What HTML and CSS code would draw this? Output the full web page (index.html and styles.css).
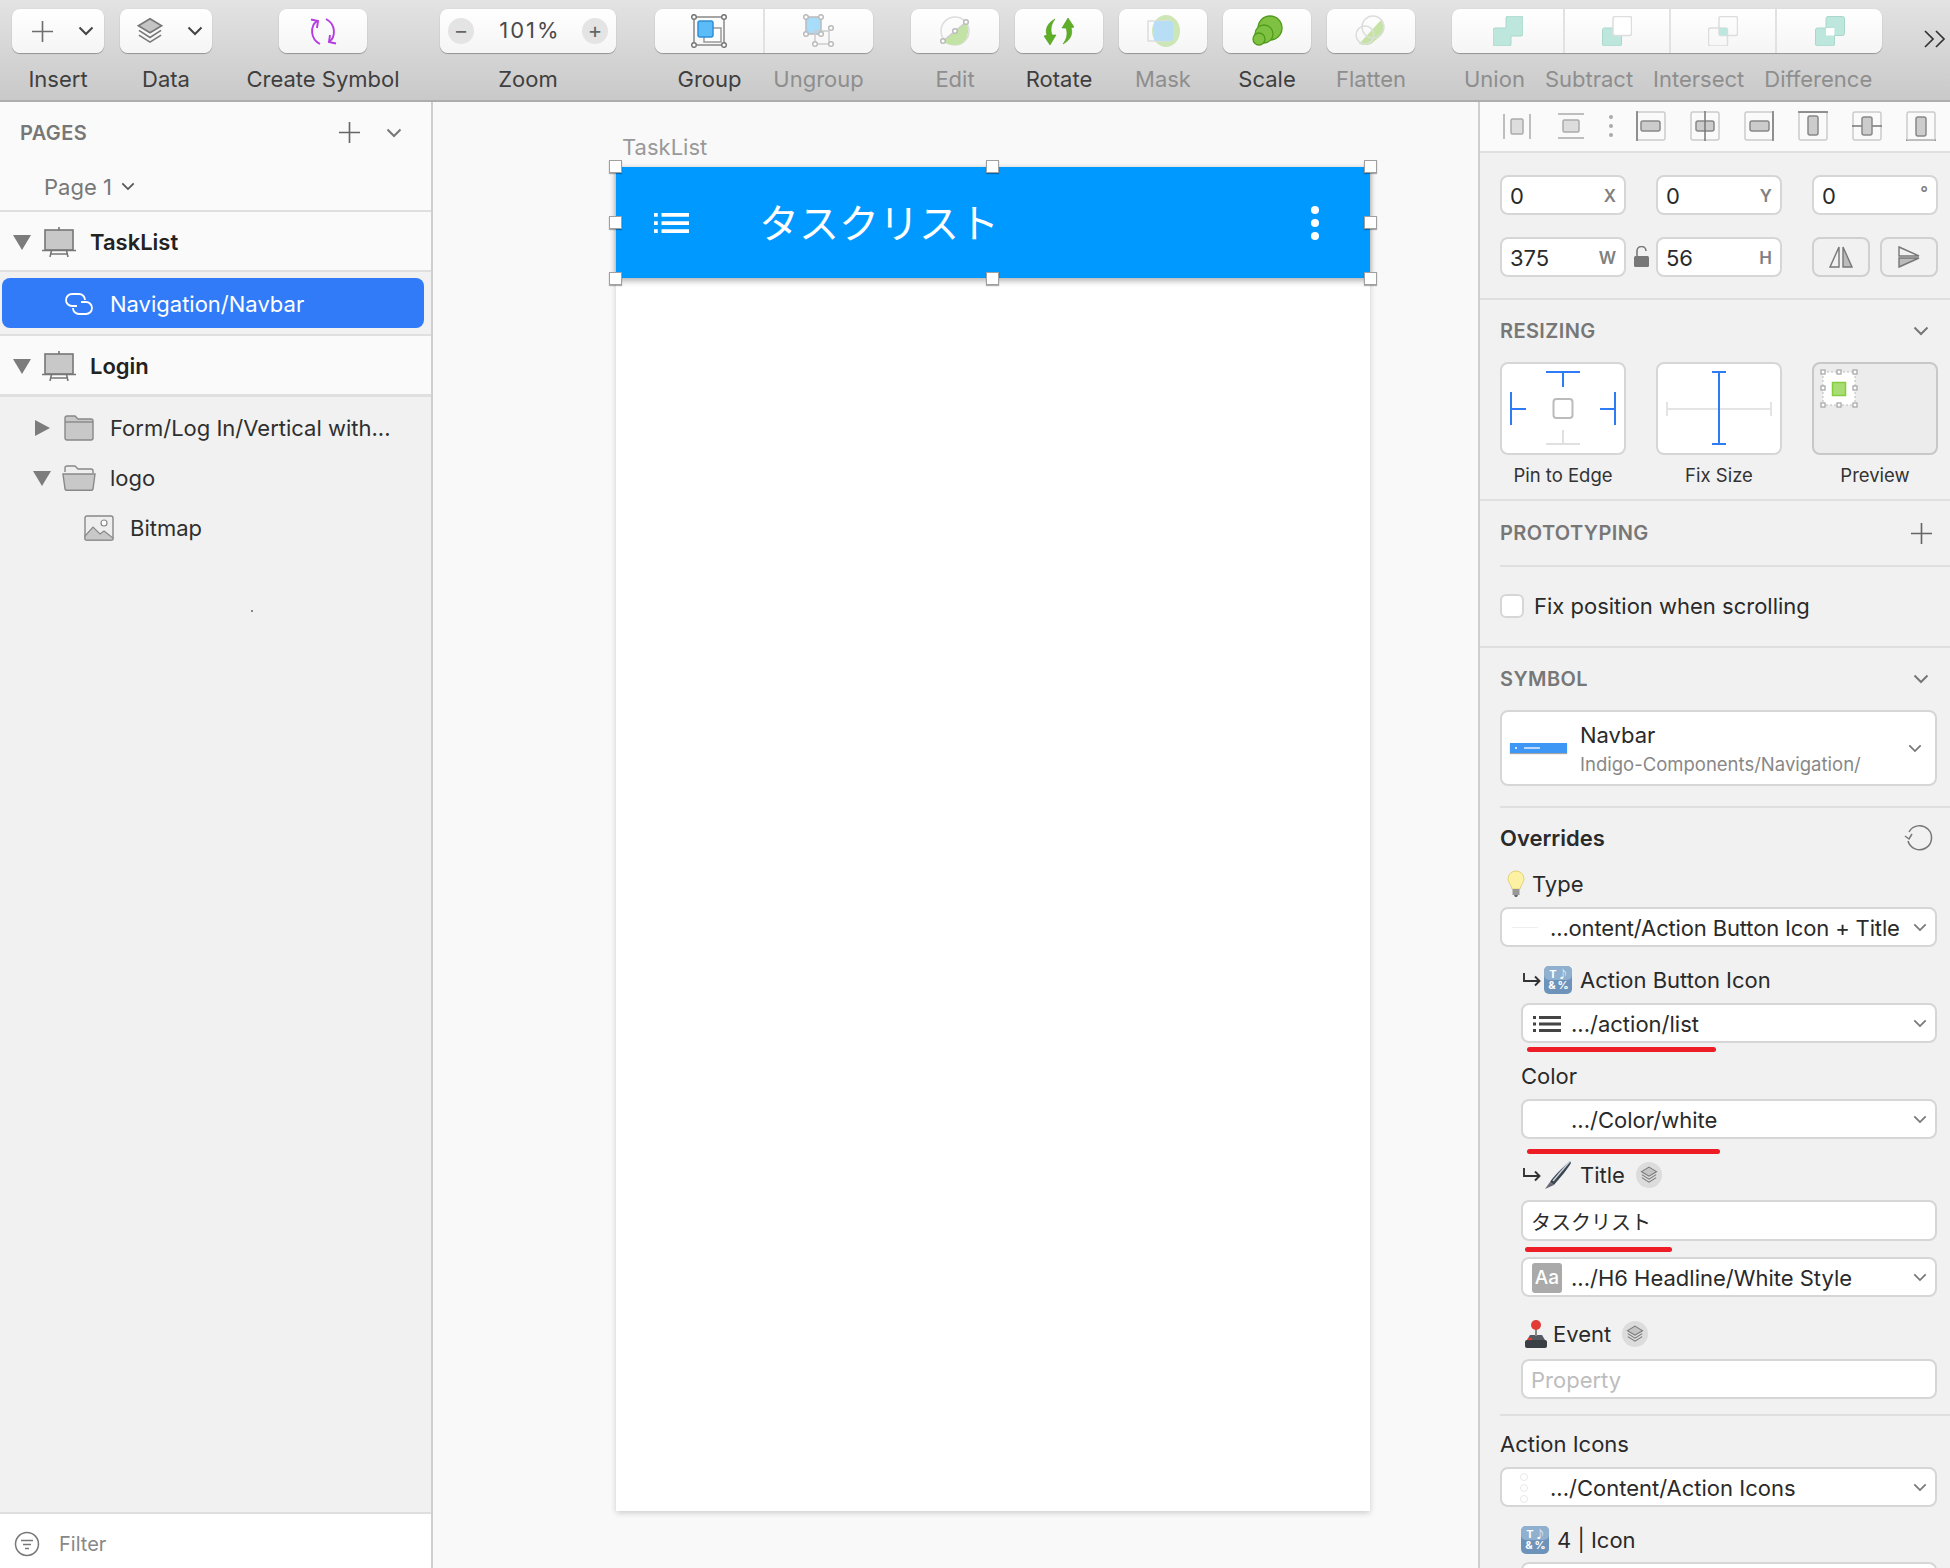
FILE: index.html
```html
<!DOCTYPE html>
<html lang="en">
<head>
  <meta charset="UTF-8">
  <title>Sketch - TaskList</title>
  <link rel="stylesheet" href="styles.css">
</head>
<body>
  <svg class="sprites" width="0" height="0">
    <symbol id="chev" viewBox="0 0 16 10"><path d="M1.5 1.5 8 8l6.5-6.5" fill="none" stroke="currentColor" stroke-width="2"/></symbol>
    <symbol id="plus" viewBox="0 0 24 24"><path d="M12 1v22M1 12h22" fill="none" stroke="currentColor" stroke-width="1.7"/></symbol>
    <symbol id="layers" viewBox="0 0 24 24">
      <path d="M12 1.5 22 7.5 12 13.5 2 7.5z" fill="#c4c4c4" stroke="#777" stroke-width="1.4"/>
      <path d="M2.5 11.5 12 17.5 21.5 11.5M2.5 15.5 12 21.5 21.5 15.5" fill="none" stroke="#777" stroke-width="1.4"/>
    </symbol>
    <symbol id="easel" viewBox="0 0 34 30">
      <rect x="3" y="3" width="28" height="20" fill="#c8c8c8" stroke="#777" stroke-width="1.6"/>
      <path d="M17 0v3M0 23.5h34M8 30l1.5-6.5M26 30l-1.5-6.5M8 27h18" fill="none" stroke="#777" stroke-width="1.6"/>
    </symbol>
    <symbol id="symbols" viewBox="0 0 28 28">
      <rect width="28" height="28" rx="5" fill="#6d93ba"/>
      <rect width="28" height="14" rx="5" fill="#8fb0cf"/>
      <text x="9" y="12" class="emoji-txt">T</text><text x="19" y="12" class="emoji-txt">♪</text>
      <text x="8" y="23" class="emoji-txt">&amp;</text><text x="19" y="23" class="emoji-txt">%</text>
    </symbol>
    <symbol id="hook" viewBox="0 0 18 14"><path d="M1 0v8h15M12 3.5 16.500 8 12 12.500" fill="none" stroke="#333" stroke-width="1.900"/></symbol>
    <symbol id="list" viewBox="0 0 28 16"><path d="M0 0h3v3H0zM6 0h22v3H6zM0 6.5h3v3H0zM6 6.5h22v3H6zM0 13h3v3H0zM6 13h22v3H6z" fill="currentColor"/></symbol>
  </svg>

  <header class="toolbar">
    <div class="tool tool-insert">
      <div class="btn">
        <svg class="ic-plus"><use href="#plus"/></svg>
        <svg class="ic-chev"><use href="#chev"/></svg>
      </div>
      <span class="label">Insert</span>
    </div>
    <div class="tool tool-data">
      <div class="btn">
        <svg class="ic-layers"><use href="#layers"/></svg>
        <svg class="ic-chev"><use href="#chev"/></svg>
      </div>
      <span class="label">Data</span>
    </div>
    <div class="tool tool-symbol">
      <div class="btn">
        <svg width="27" height="27" viewBox="0 0 27 27" fill="none" stroke="#b63ae2" stroke-width="1.900">
          <path d="M10 26C0 21 0 8 7 3"/><path d="M1 1.500 8 3l-1 7"/>
          <path d="M16 1c10 5 10 18 3 23"/><path d="M26 25.500 19 24l1-7"/>
        </svg>
      </div>
      <span class="label">Create Symbol</span>
    </div>
    <div class="tool tool-zoom">
      <div class="btn btn-zoom">
        <span class="zoom-round">−</span>
        <span class="zoom-val">101%</span>
        <span class="zoom-round">+</span>
      </div>
      <span class="label">Zoom</span>
    </div>
    <div class="tool tool-group">
      <div class="btn btn-seg">
        <div class="seg">
          <svg width="36" height="34" viewBox="0 0 36 34">
            <rect x="3" y="3" width="30" height="28" fill="none" stroke="#888" stroke-width="1.500"/>
            <rect x="13" y="14" width="17" height="14" fill="#fff" stroke="#999" stroke-width="1.500"/>
            <rect x="7" y="7" width="15" height="16" rx="2" fill="#5bbcf8" stroke="#2f8fd6" stroke-width="1.500"/>
            <g fill="#fff" stroke="#777" stroke-width="1.500"><circle cx="3" cy="3" r="2.300"/><circle cx="33" cy="3" r="2.300"/><circle cx="3" cy="31" r="2.300"/><circle cx="33" cy="31" r="2.300"/></g>
          </svg>
        </div>
        <div class="seg seg-off">
          <svg width="34" height="34" viewBox="0 0 34 34">
            <rect x="4" y="3" width="15" height="17" fill="#a8dcfb" stroke="#bbb" stroke-width="1.500"/>
            <rect x="13" y="17" width="14" height="13" fill="none" stroke="#ccc" stroke-width="1.500"/>
            <g fill="#fff" stroke="#bbb" stroke-width="1.500"><circle cx="4" cy="3" r="2.300"/><circle cx="19" cy="3" r="2.300"/><circle cx="4" cy="20" r="2.300"/><circle cx="19" cy="20" r="2.300"/><circle cx="29" cy="14" r="2.300"/><circle cx="13" cy="30" r="2.300"/><circle cx="29" cy="30" r="2.300"/></g>
          </svg>
        </div>
      </div>
      <div class="label-row">
        <span class="label">Group</span>
        <span class="label off">Ungroup</span>
      </div>
    </div>
    <div class="tool tool-edit">
      <div class="btn">
        <svg width="32" height="34" viewBox="0 0 32 34">
          <circle cx="16" cy="17" r="14" fill="none" stroke="#ddd" stroke-width="1.500"/>
          <path d="M4 27 27 8c5 9 1 23-11 23-5 0-9-1-12-4z" fill="#c3e2a6"/>
          <path d="M4 27 27 8" stroke="#ccc" stroke-width="1.200"/>
          <g fill="#fff" stroke="#bbb" stroke-width="1.500"><circle cx="4" cy="27" r="2.300"/><circle cx="16" cy="17" r="2.300"/><circle cx="27" cy="8" r="2.300"/></g>
        </svg>
      </div>
      <span class="label off">Edit</span>
    </div>
    <div class="tool tool-rotate">
      <div class="btn">
        <svg width="30" height="27" viewBox="0 0 30 27" fill="#5fae27" stroke="#4f9a1c" stroke-width=".6">
          <path d="M11 1C3 5 1 12 3 17l-3 1 6 9 6-10-4 0C6 12 7 6 11 1z"/>
          <path d="M19 26c8-4 10-11 8-16l3-1-6-9-6 10 4 0c2 5 1 11-3 16z"/>
        </svg>
      </div>
      <span class="label">Rotate</span>
    </div>
    <div class="tool tool-mask">
      <div class="btn">
        <svg width="36" height="34" viewBox="0 0 36 34">
          <ellipse cx="21" cy="17" rx="14" ry="16" fill="#cde6b6"/>
          <rect x="3" y="7" width="21" height="20" fill="none" stroke="#ddd" stroke-width="1.500"/>
          <rect x="9" y="7" width="19" height="20" rx="2" fill="#b7def5"/>
        </svg>
      </div>
      <span class="label off">Mask</span>
    </div>
    <div class="tool tool-scale">
      <div class="btn">
        <svg width="32" height="32" viewBox="0 0 32 32" fill="#7fc241" stroke="#4f9a1c" stroke-width="1.300">
          <ellipse cx="19" cy="13" rx="12" ry="12"/>
          <ellipse cx="13" cy="19" rx="9" ry="9"/>
          <ellipse cx="8" cy="24" rx="6" ry="6"/>
        </svg>
      </div>
      <span class="label">Scale</span>
    </div>
    <div class="tool tool-flatten">
      <div class="btn">
        <svg width="34" height="34" viewBox="0 0 34 34">
          <path d="M5 30 27 6c4 6 3 15-4 19-3 2-5 5-9 6-3 0-6 0-9-1z" fill="#c5e3a5"/>
          <g fill="none" stroke="#ddd" stroke-width="1.500"><circle cx="19" cy="13" r="11"/><circle cx="11" cy="21" r="9"/></g>
        </svg>
      </div>
      <span class="label off">Flatten</span>
    </div>
    <div class="tool tool-bool">
      <div class="btn btn-seg">
        <div class="seg seg-union">
          <svg width="30" height="30" viewBox="0 0 30 30"><path d="M13 2a2 2 0 0 1 2-2h13a2 2 0 0 1 2 2v16a2 2 0 0 1-2 2h-10v8a2 2 0 0 1-2 2H2a2 2 0 0 1-2-2V14a2 2 0 0 1 2-2h11z" fill="#bde7dc" stroke="#a9d8cb"/></svg>
        </div>
        <div class="seg seg-sub">
          <svg width="30" height="30" viewBox="0 0 30 30"><rect x=".5" y="12" width="19" height="18" rx="2" fill="#bde7dc" stroke="#a9d8cb"/><rect x="11" y=".5" width="18.500" height="19" rx="2" fill="#fff" stroke="#ddd" stroke-width="1.500"/></svg>
        </div>
        <div class="seg seg-int">
          <svg width="30" height="30" viewBox="0 0 30 30"><rect x="11" y=".5" width="18.500" height="19" rx="2" fill="none" stroke="#ddd" stroke-width="1.500"/><rect x=".5" y="12" width="19" height="18" rx="2" fill="none" stroke="#ddd" stroke-width="1.500"/><rect x="11" y="12" width="8.500" height="7.500" fill="#bde7dc"/></svg>
        </div>
        <div class="seg seg-diff">
          <svg width="30" height="30" viewBox="0 0 30 30"><rect x="11" y=".5" width="18.500" height="19" rx="2" fill="#bde7dc" stroke="#a9d8cb"/><rect x=".5" y="12" width="19" height="18" rx="2" fill="#bde7dc" stroke="#a9d8cb"/><rect x="11" y="12" width="8.500" height="7.500" fill="#fff"/></svg>
        </div>
      </div>
      <div class="label-row bool-labels">
        <span class="label off">Union</span>
        <span class="label off">Subtract</span>
        <span class="label off">Intersect</span>
        <span class="label off">Difference</span>
      </div>
    </div>
    <svg class="more" width="22" height="18" viewBox="0 0 22 18" fill="none" stroke="#333" stroke-width="1.700"><path d="M1 1l8 8-8 8M12 1l8 8-8 8"/></svg>
  </header>

  <div class="main">
    <aside class="layers">
      <div class="pages-head">
        <span class="caps">PAGES</span>
        <svg class="head-plus"><use href="#plus"/></svg>
        <svg class="head-chev"><use href="#chev"/></svg>
      </div>
      <div class="page-row">
        <span>Page 1</span>
        <svg class="page-chev"><use href="#chev"/></svg>
      </div>
      <div class="board-row">
        <i class="tri-down"></i>
        <svg class="easel"><use href="#easel"/></svg>
        <b>TaskList</b>
      </div>
      <div class="sel-wrap">
        <div class="sel-pill">
          <svg width="30" height="22" viewBox="0 0 30 22" fill="none" stroke="#fff" stroke-width="1.800">
            <path d="M13 13H8A6 6 0 0 1 8 1h7a6 6 0 0 1 6 6"/>
            <path d="M17 9h5a6 6 0 0 1 0 12h-7a6 6 0 0 1-6-6"/>
          </svg>
          <span>Navigation/Navbar</span>
        </div>
      </div>
      <div class="board-row">
        <i class="tri-down"></i>
        <svg class="easel"><use href="#easel"/></svg>
        <b>Login</b>
      </div>
      <div class="tree">
        <div class="tree-row">
          <i class="tri-right"></i>
          <svg width="30" height="26" viewBox="0 0 30 26"><path d="M1 3a2 2 0 0 1 2-2h8l3 3h13a2 2 0 0 1 2 2v17a2 2 0 0 1-2 2H3a2 2 0 0 1-2-2z" fill="#c8c8c8" stroke="#888" stroke-width="1.400"/><path d="M1 7h28" stroke="#888" stroke-width="1.400"/></svg>
          <span>Form/Log In/Vertical with...</span>
        </div>
        <div class="tree-row">
          <i class="tri-down small"></i>
          <svg class="folder-open" width="34" height="26" viewBox="0 0 34 26"><path d="M3 7V3a2 2 0 0 1 2-2h8l3 3h13a2 2 0 0 1 2 2v2" fill="#eee" stroke="#888" stroke-width="1.400"/><path d="M1 9h32l-2 15a1.500 1.500 0 0 1-1.500 1.200H4.500A1.500 1.500 0 0 1 3 24z" fill="#c8c8c8" stroke="#888" stroke-width="1.400"/></svg>
          <span>logo</span>
        </div>
        <div class="tree-row bitmap-row">
          <svg width="30" height="26" viewBox="0 0 30 26"><rect x="1" y="1" width="28" height="24" rx="2" fill="#eee" stroke="#888" stroke-width="1.400"/><circle cx="20" cy="8" r="3" fill="#fff" stroke="#888" stroke-width="1.200"/><path d="M1 21l8-9 7 7 4-3 9 7v1a1 1 0 0 1-1 1H2a1 1 0 0 1-1-1z" fill="#c8c8c8" stroke="#888" stroke-width="1.200"/></svg>
          <span>Bitmap</span>
        </div>
        <i class="speck"></i>
      </div>
      <div class="filter">
        <svg width="26" height="26" viewBox="0 0 26 26" fill="none" stroke="#777" stroke-width="1.500"><circle cx="13" cy="13" r="11.500"/><path d="M7 9.500h12M9 13.500h8M11 17.500h4"/></svg>
        <span>Filter</span>
      </div>
    </aside>

    <section class="canvas">
      <div class="board-name">TaskList</div>
      <div class="artboard">
        <div class="navbar">
          <svg class="nav-list"><use href="#list"/></svg>
          <span class="nav-title">タスクリスト</span>
          <span class="nav-dots"><i></i><i></i><i></i></span>
          <i class="handle h-tl"></i><i class="handle h-tc"></i><i class="handle h-tr"></i>
          <i class="handle h-ml"></i><i class="handle h-mr"></i>
          <i class="handle h-bl"></i><i class="handle h-bc"></i><i class="handle h-br"></i>
        </div>
      </div>
    </section>

    <aside class="inspector">
      <div class="align-row">
        <svg viewBox="0 0 30 30" class="al" fill="#ddd" stroke="#aaa" stroke-width="1.500"><path d="M2 3v25M28 3v25" fill="none"/><rect x="9" y="8" width="12" height="15" rx="1.500"/></svg>
        <svg viewBox="0 0 30 30" class="al" fill="#ddd" stroke="#aaa" stroke-width="1.500"><path d="M2 3h26M2 27h26" fill="none"/><rect x="7" y="9" width="16" height="12" rx="1.500"/></svg>
        <span class="al-dots"><i></i><i></i><i></i></span>
        <svg viewBox="0 0 30 30" class="al" fill="#ccc" stroke="#888" stroke-width="1.500"><rect x="1" y="1" width="28" height="28" rx="2" fill="none" stroke="#ccc"/><path d="M1 0v30" fill="none" stroke="#777"/><rect x="5" y="10" width="19" height="10" rx="2"/></svg>
        <svg viewBox="0 0 30 30" class="al" fill="#ccc" stroke="#888" stroke-width="1.500"><rect x="1" y="1" width="28" height="28" rx="2" fill="none" stroke="#ccc"/><rect x="6" y="10" width="18" height="10" rx="2"/><path d="M15 0v30" fill="none" stroke="#777"/></svg>
        <svg viewBox="0 0 30 30" class="al" fill="#ccc" stroke="#888" stroke-width="1.500"><rect x="1" y="1" width="28" height="28" rx="2" fill="none" stroke="#ccc"/><path d="M29 0v30" fill="none" stroke="#777"/><rect x="6" y="10" width="19" height="10" rx="2"/></svg>
        <svg viewBox="0 0 30 30" class="al" fill="#ccc" stroke="#888" stroke-width="1.500"><rect x="1" y="1" width="28" height="28" rx="2" fill="none" stroke="#ccc"/><path d="M0 1h30" fill="none" stroke="#777"/><rect x="10" y="5" width="10" height="19" rx="2"/></svg>
        <svg viewBox="0 0 30 30" class="al" fill="#ccc" stroke="#888" stroke-width="1.500"><rect x="1" y="1" width="28" height="28" rx="2" fill="none" stroke="#ccc"/><path d="M0 15h30" fill="none" stroke="#777"/><rect x="10" y="6" width="10" height="18" rx="2"/></svg>
        <svg viewBox="0 0 30 30" class="al" fill="#ccc" stroke="#888" stroke-width="1.500"><path d="M0 29h30" fill="none" stroke="#777"/><rect x="1" y="1" width="28" height="28" rx="2" fill="none" stroke="#ccc"/><rect x="10" y="6" width="10" height="19" rx="2"/></svg>
      </div>

      <div class="geom">
        <div class="geom-row">
          <div class="field num"><span>0</span><em>X</em></div>
          <div class="lock-slot"></div>
          <div class="field num"><span>0</span><em>Y</em></div>
          <div class="lock-slot"></div>
          <div class="field num"><span>0</span><em class="deg">°</em></div>
        </div>
        <div class="geom-row">
          <div class="field num"><span>375</span><em>W</em></div>
          <div class="lock-slot">
            <svg width="15" height="22" viewBox="0 0 15 22" fill="none"><path d="M3 10V5a4.500 4.500 0 0 1 9 0" stroke="#777" stroke-width="1.600"/><rect y="10" width="15" height="11" rx="1.500" fill="#777"/></svg>
          </div>
          <div class="field num"><span>56</span><em>H</em></div>
          <div class="lock-slot"></div>
          <div class="flips">
            <div class="flip"><svg width="24" height="24" viewBox="0 0 24 24" stroke="#777" stroke-width="1.400"><path d="M10 2 1 22h9z" fill="none"/><path d="M14 2l9 20h-9z" fill="#bbb"/></svg></div>
            <div class="flip"><svg width="24" height="24" viewBox="0 0 24 24" stroke="#777" stroke-width="1.400"><path d="M2 2l20 9H2z" fill="none"/><path d="M2 22l20-9H2z" fill="#bbb"/></svg></div>
          </div>
        </div>
      </div>

      <div class="resizing">
        <div class="sec-head"><span class="caps">RESIZING</span><svg class="sec-chev"><use href="#chev"/></svg></div>
        <div class="pin-row">
          <div class="pin-col">
            <svg class="pin-box" viewBox="2 2 122 89" fill="none" stroke-width="2">
              <g stroke="#2f7bf6"><path d="M46 10h34M63 10v15M11 30v33M11 47h15M115 30v33M100 47h15"/></g>
              <path d="M63 68v14M46 82h34" stroke="#e0e0e0"/>
              <rect x="53.500" y="37" width="19" height="19" rx="3" fill="#fff" stroke="#bbb"/>
            </svg>
            <span>Pin to Edge</span>
          </div>
          <div class="pin-col">
            <svg class="pin-box" viewBox="2 2 122 89" fill="none" stroke-width="2">
              <path d="M11 47h104M11 40v14M115 40v14" stroke="#e4e4e4"/>
              <path d="M63 10v72M56 10h14M56 82h14" stroke="#2f7bf6"/>
            </svg>
            <span>Fix Size</span>
          </div>
          <div class="pin-col">
            <svg class="pin-box preview" viewBox="2 2 122 89">
              <rect x="11" y="10" width="32" height="33" fill="#fff" stroke="#bbb" stroke-dasharray="2 2"/>
              <rect x="20.500" y="20.500" width="13" height="13" fill="#a8dd74" stroke="#85cc3e" stroke-width="1.500"/>
              <g fill="#fff" stroke="#aaa" stroke-width="1.300">
                <rect x="9" y="8" width="4" height="4"/><rect x="25" y="8" width="4" height="4"/><rect x="41" y="8" width="4" height="4"/>
                <rect x="9" y="24" width="4" height="4"/><rect x="41" y="24" width="4" height="4"/>
                <rect x="9" y="41" width="4" height="4"/><rect x="25" y="41" width="4" height="4"/><rect x="41" y="41" width="4" height="4"/>
              </g>
            </svg>
            <span>Preview</span>
          </div>
        </div>
      </div>

      <div class="proto">
        <div class="sec-head lined"><span class="caps">PROTOTYPING</span><svg class="sec-plus"><use href="#plus"/></svg></div>
        <div class="check-row"><i class="check"></i><span>Fix position when scrolling</span></div>
      </div>

      <div class="symbol">
        <div class="sec-head"><span class="caps">SYMBOL</span><svg class="sec-chev"><use href="#chev"/></svg></div>
        <div class="symbol-box">
          <span class="thumb"></span>
          <div class="symbol-name">
            <span>Navbar</span>
            <small>Indigo-Components/Navigation/</small>
          </div>
          <svg class="sel-chev"><use href="#chev"/></svg>
        </div>
      </div>

      <div class="overrides">
        <div class="ov-head">
          <b>Overrides</b>
          <svg width="30" height="30" viewBox="0 0 30 30" fill="none" stroke="#777" stroke-width="1.500"><path d="M5 9a12 12 0 1 1-1 9"/><path d="M1 13l4 3 3-5" /></svg>
        </div>

        <div class="ov-row ov-type">
          <svg width="18" height="28" viewBox="0 0 18 28"><path d="M9 1a8 8 0 0 1 8 8c0 4-3 5-4 10H5C4 14 1 13 1 9a8 8 0 0 1 8-8z" fill="#fdf1a4" stroke="#e3d27a"/><rect x="5.500" y="19" width="7" height="6" fill="#999"/><path d="M7 25h4l-1 2H8z" fill="#666"/></svg>
          <span>Type</span>
        </div>
        <div class="field sel mt7">
          <span class="slot"><i class="ghost-bar"></i></span>
          <span class="val val-tight">...ontent/Action Button Icon + Title</span>
          <svg class="sel-chev"><use href="#chev"/></svg>
        </div>

        <div class="indent">
          <div class="ov-row mt17">
            <svg class="hook"><use href="#hook"/></svg>
            <svg class="sym"><use href="#symbols"/></svg>
            <span>Action Button Icon</span>
          </div>
          <div class="field sel mt7">
            <span class="slot"><svg class="slot-list"><use href="#list"/></svg></span>
            <span class="val">.../action/list</span>
            <svg class="sel-chev"><use href="#chev"/></svg>
          </div>
          <i class="red red1"></i>

          <div class="ov-row mt8"><span>Color</span></div>
          <div class="field sel mt7">
            <span class="slot"></span>
            <span class="val">.../Color/white</span>
            <svg class="sel-chev"><use href="#chev"/></svg>
          </div>
          <i class="red red2"></i>

          <div class="ov-row mt5">
            <svg class="hook"><use href="#hook"/></svg>
            <svg width="28" height="28" viewBox="0 0 28 28"><path d="M26 0C19 6 10 15 6 21l4 3C15 18 23 9 27 2z" fill="#3b4550"/><path d="M26 0 9 20" stroke="#c8d2dc" stroke-width="1.500"/><path d="M6 21l4 3-9 4z" fill="#667"/></svg>
            <span>Title</span>
            <span class="layer-chip"><svg width="18" height="18"><use href="#layers"/></svg></span>
          </div>
          <div class="field text-field"><span>タスクリスト</span></div>
          <i class="red red3"></i>

          <div class="field sel style-field">
            <span class="slot"><span class="aa">Aa</span></span>
            <span class="val">.../H6 Headline/White Style</span>
            <svg class="sel-chev"><use href="#chev"/></svg>
          </div>

          <div class="ov-row event-row">
            <svg width="22" height="28" viewBox="0 0 22 28"><rect y="20" width="22" height="8" rx="2" fill="#3a3f46"/><path d="M2 20l3-5h12l3 5z" fill="#555b63"/><path d="M10 8h2v8h-2z" fill="#888"/><circle cx="11" cy="5" r="5" fill="#e23b35"/><ellipse cx="5" cy="19" rx="2.500" ry="1.300" fill="#e23b35"/></svg>
            <span>Event</span>
            <span class="layer-chip"><svg width="18" height="18"><use href="#layers"/></svg></span>
          </div>
          <div class="field placeholder-field"><span>Property</span></div>
        </div>
      </div>

      <div class="action-icons">
        <div class="ov-row"><span>Action Icons</span></div>
        <div class="field sel mt7">
          <span class="slot"><svg width="8" height="30" viewBox="0 0 8 30" fill="none" stroke="#e8e8e8" transform="translate(8 0)"><circle cx="4" cy="4" r="3.500"/><circle cx="4" cy="15" r="3.500"/><circle cx="4" cy="26" r="3.500"/></svg></span>
          <span class="val">.../Content/Action Icons</span>
          <svg class="sel-chev"><use href="#chev"/></svg>
        </div>
        <div class="indent">
          <div class="ov-row mt17">
            <svg class="sym"><use href="#symbols"/></svg>
            <span>4 | Icon</span>
          </div>
          <div class="field sel last-field"></div>
        </div>
      </div>
    </aside>
  </div>
</body>
</html>
```

FILE: styles.css
```css
* {
  box-sizing: border-box;
}

html, body {
  margin: 0;
  height: 100%;
  overflow: hidden;
}

body {
  font-family: Inter, "Noto Sans CJK JP", sans-serif;
  font-size: 22px;
  color: #2a2a2a;
  background-color: #f9f9f9;
}

i, em {
  font-style: normal;
}

.sprites {
  display: none;
}

.emoji-txt {
  font-size: 11px;
  font-weight: 700;
  fill: #fff;
  text-anchor: middle;
}

/* toolbar */
.toolbar {
  display: flex;
  height: 102px;
  padding: 9px 0 0 12px;
  background: linear-gradient(#e3e3e3, #c9c9c9);
  border-bottom: 2px solid #adadad;
}

.tool {
  display: flex;
  flex-direction: column;
  align-items: center;
  width: 88px;
  flex: none;
}

.btn {
  display: flex;
  align-items: center;
  justify-content: center;
  width: 100%;
  height: 44px;
  background: linear-gradient(#ffffff, #f5f5f5);
  border-radius: 8px;
  box-shadow: 0 1px 1px rgba(0, 0, 0, 0.3), 0 0 1px rgba(0, 0, 0, 0.12);
}

.label {
  margin-top: 13px;
  line-height: 26px;
  font-size: 22px;
  color: #3f3f3f;
  white-space: nowrap;
}

.label.off {
  color: #8e8e8e;
}

.tool-insert, .tool-data {
  width: 92px;
}

.tool-data {
  margin-left: 16px;
}

.tool-insert .btn, .tool-data .btn {
  justify-content: flex-start;
}

.tool-symbol {
  margin-left: 67px;
}

.tool-zoom {
  width: 176px;
  margin-left: 73px;
}

.tool-group {
  width: 218px;
  margin-left: 39px;
}

.tool-edit {
  margin-left: 38px;
}

.tool-rotate, .tool-mask, .tool-scale, .tool-flatten {
  margin-left: 16px;
}

.tool-bool {
  width: 430px;
  margin-left: 37px;
}

.ic-plus {
  width: 23px;
  height: 23px;
  margin-left: 19px;
  color: #6e6e6e;
}

.ic-layers {
  width: 28px;
  height: 28px;
  margin-left: 16px;
}

.ic-chev {
  width: 16px;
  height: 10px;
  color: #444;
}

.tool-insert .ic-chev {
  margin-left: 24px;
}

.tool-data .ic-chev {
  margin-left: 23px;
}

.btn-zoom {
  justify-content: space-between;
  padding: 0 8px;
}

.zoom-round {
  width: 26px;
  height: 26px;
  border-radius: 50%;
  background-color: #e4e4e4;
  text-align: center;
  line-height: 24px;
  font-size: 22px;
  color: #666;
}

.zoom-val {
  padding: 0 0 2px 4px;
  letter-spacing: 2px;
  color: #4a4a4a;
}

.btn-seg {
  justify-content: stretch;
}

.seg {
  flex: 1;
  height: 100%;
  display: flex;
  align-items: center;
  justify-content: center;
  border-left: 2px solid #e2e2e2;
}

.seg:first-child {
  border-left: 0;
}

.seg-union {
  flex: none;
  width: 111px;
}

.seg-sub, .seg-int {
  flex: none;
  width: 106px;
}

.label-row {
  display: flex;
  width: 100%;
}

.tool-group .label {
  flex: 1;
  text-align: center;
}

.bool-labels {
  gap: 20px;
  padding-left: 12px;
}

.more {
  margin: 21px 0 0 42px;
  flex: none;
}

/* main area */
.main {
  display: flex;
  height: calc(100% - 102px);
}

.caps {
  font-size: 20px;
  font-weight: 600;
  letter-spacing: 0.4px;
  color: #777;
}

/* layer list */
.layers {
  display: flex;
  flex-direction: column;
  width: 433px;
  flex: none;
  background-color: #fafafa;
  border-right: 2px solid #cfcfcf;
}

.pages-head {
  display: flex;
  align-items: center;
  height: 61px;
  padding-left: 20px;
}

.head-plus {
  width: 23px;
  height: 23px;
  margin-left: auto;
  color: #666;
}

.head-chev {
  width: 18px;
  height: 10px;
  margin: 0 28px 0 24px;
  color: #777;
}

.page-row {
  display: flex;
  align-items: center;
  height: 49px;
  padding-left: 44px;
  color: #777;
  border-bottom: 2px solid #dfdfdf;
}

.page-chev {
  width: 14px;
  height: 9px;
  margin-left: 9px;
  color: #555;
}

.board-row {
  display: flex;
  align-items: center;
  height: 60px;
  padding: 2px 0 0 13px;
  border-bottom: 2px solid #dfdfdf;
}

.board-row b {
  margin-left: 14px;
  font-weight: 600;
  color: #222;
}

.easel {
  width: 34px;
  height: 30px;
  margin-left: 11px;
}

.tri-down {
  width: 0;
  height: 0;
  border-left: 9px solid transparent;
  border-right: 9px solid transparent;
  border-top: 15px solid #7c7c7c;
}

.tri-down.small {
  margin-left: 33px;
}

.tri-right {
  width: 0;
  height: 0;
  margin-left: 35px;
  border-top: 8px solid transparent;
  border-bottom: 8px solid transparent;
  border-left: 15px solid #7c7c7c;
}

.sel-wrap {
  height: 64px;
  padding: 6px 7px 0 2px;
  background-color: #f1f1f1;
  border-bottom: 2px solid #dfdfdf;
}

.sel-pill {
  display: flex;
  align-items: center;
  height: 50px;
  padding: 2px 0 0 62px;
  border-radius: 8px;
  color: #fff;
  background-color: #317bf8;
}

.sel-pill span {
  margin-left: 16px;
}

.tree {
  position: relative;
  flex: 1;
  padding-top: 6px;
  background-color: #f1f1f1;
  border-top: 1px solid #dfdfdf;
}

.tree-row {
  display: flex;
  align-items: center;
  height: 50px;
}

.tree-row span {
  position: relative;
  color: #2f2f2f;
}

.tree-row .tri-right + svg {
  margin-left: 14px;
}

.tree-row .tri-right ~ span {
  margin-left: 16px;
}

.folder-open {
  margin-left: 11px;
}

.tree-row .folder-open + span {
  margin-left: 14px;
}

.bitmap-row {
  padding-left: 84px;
}

.bitmap-row span {
  margin-left: 16px;
}

.speck {
  position: absolute;
  left: 251px;
  top: 213px;
  width: 2px;
  height: 2px;
  background-color: #888;
}

.filter {
  display: flex;
  align-items: center;
  gap: 19px;
  height: 56px;
  padding: 6px 0 0 14px;
  font-size: 20px;
  color: #888;
  background-color: #fff;
  border-top: 2px solid #dfdfdf;
}

/* canvas */
.canvas {
  flex: 1;
  padding: 32px 0 0 183px;
  background-color: #f9f9f9;
}

.board-name {
  height: 33px;
  padding-left: 6px;
  line-height: 26px;
  font-size: 22px;
  color: #999;
}

.artboard {
  width: 754px;
  height: 1344px;
  background-color: #fff;
  box-shadow: 0 2px 6px rgba(0, 0, 0, 0.18);
}

.navbar {
  position: relative;
  display: flex;
  align-items: center;
  height: 111px;
  color: #fff;
  background-color: #0099ff;
  box-shadow: 0 3px 6px rgba(0, 0, 0, 0.3);
}

.nav-list {
  width: 37px;
  height: 20px;
  margin-left: 37px;
}

.nav-title {
  margin: 2px 0 0 69px;
  font-size: 40px;
  line-height: 1;
}

.nav-dots {
  display: flex;
  flex-direction: column;
  gap: 5px;
  margin: 0 51px 0 auto;
}

.nav-dots i {
  width: 8px;
  height: 8px;
  border-radius: 50%;
  background-color: #fff;
}

.handle {
  position: absolute;
  width: 13px;
  height: 13px;
  background-color: #fff;
  border: 1px solid #a0a0a0;
  box-shadow: 0 1px 1px rgba(0, 0, 0, 0.3);
}

.h-tl, .h-tc, .h-tr {
  top: -7px;
}

.h-ml, .h-mr {
  top: 49px;
}

.h-bl, .h-bc, .h-br {
  bottom: -7px;
}

.h-tl, .h-ml, .h-bl {
  left: -7px;
}

.h-tc, .h-bc {
  left: 370px;
}

.h-tr, .h-mr, .h-br {
  right: -7px;
}

/* inspector */
.inspector {
  width: 472px;
  flex: none;
  overflow: hidden;
  background-color: #f1f1f1;
  border-left: 2px solid #cfcfcf;
}

.align-row {
  display: flex;
  align-items: center;
  gap: 24px;
  height: 51px;
  padding: 0 0 2px 22px;
  background-color: #fafafa;
  border-bottom: 2px solid #dfdfdf;
}

.al {
  width: 30px;
  height: 30px;
  flex: none;
}

.al-dots {
  display: flex;
  flex-direction: column;
  align-items: center;
  gap: 5px;
  width: 6px;
  margin: 0 -2px;
}

.al-dots i {
  width: 4px;
  height: 4px;
  border-radius: 50%;
  background-color: #aaa;
}

.geom {
  height: 147px;
  padding: 22px 13px 0 20px;
  border-bottom: 2px solid #dfdfdf;
}

.geom-row {
  display: flex;
  margin-bottom: 22px;
}

.field {
  display: flex;
  align-items: center;
  height: 40px;
  padding: 0 8px;
  background-color: #fff;
  border: 2px solid #d6d6d6;
  border-radius: 8px;
}

.field.num {
  width: 126px;
  flex: none;
  padding-top: 1px;
}

.field.num em {
  margin-left: auto;
  font-size: 17px;
  font-weight: 600;
  color: #808080;
}

.field.num .deg {
  margin-top: -6px;
}

.lock-slot {
  display: flex;
  align-items: center;
  justify-content: center;
  width: 30px;
  flex: none;
}

.flips {
  display: flex;
  gap: 10px;
}

.flip {
  display: flex;
  align-items: center;
  justify-content: center;
  width: 58px;
  height: 40px;
  background-color: #f1f1f1;
  border: 2px solid #d0d0d0;
  border-radius: 8px;
}

.sec-head {
  display: flex;
  align-items: center;
  justify-content: space-between;
  height: 62px;
  padding-right: 7px;
}

.sec-chev {
  width: 18px;
  height: 10px;
  color: #777;
}

.sec-plus {
  width: 23px;
  height: 23px;
  color: #666;
}

.resizing {
  height: 201px;
  padding: 0 13px 0 20px;
  border-bottom: 2px solid #dfdfdf;
}

.pin-row {
  display: flex;
  gap: 30px;
}

.pin-col {
  display: flex;
  flex-direction: column;
  align-items: center;
  gap: 7px;
  width: 126px;
  font-size: 18.5px;
  line-height: 26px;
  color: #333;
}

.pin-box {
  width: 126px;
  height: 93px;
  background-color: #fff;
  border: 2px solid #d6d6d6;
  border-radius: 8px;
}

.pin-box.preview {
  background-color: #ececec;
  border-color: #c8c8c8;
}

.proto {
  height: 147px;
  padding-left: 20px;
  border-bottom: 2px solid #dfdfdf;
}

.lined {
  height: 66px;
  padding-right: 17px;
  border-bottom: 2px solid #dfdfdf;
}

.check-row {
  display: flex;
  align-items: center;
  gap: 10px;
  height: 78px;
}

.check {
  width: 24px;
  height: 24px;
  background-color: #fff;
  border: 2px solid #d6d6d6;
  border-radius: 6px;
}

.symbol {
  padding-left: 20px;
}

.symbol .sec-head {
  padding-right: 20px;
}

.symbol-box {
  display: flex;
  align-items: center;
  height: 76px;
  margin-right: 13px;
  padding: 0 13px 0 8px;
  background-color: #fff;
  border: 2px solid #d6d6d6;
  border-radius: 8px;
}

.thumb {
  width: 57px;
  height: 10px;
  flex: none;
  background: linear-gradient(#d5e8ff, #d5e8ff) no-repeat 5px 4px / 2px 2px,
    linear-gradient(#b9d8fb, #b9d8fb) no-repeat 14px 4px / 16px 2px,
    #3f97f5;
  box-shadow: 0 1px 1px rgba(0, 0, 0, 0.35);
}

.symbol-name {
  display: flex;
  flex-direction: column;
  margin: 3px 0 0 13px;
  line-height: 29px;
}

.symbol-name small {
  font-size: 18.5px;
  color: #888;
}

.sel-chev {
  width: 14px;
  height: 9px;
  margin-left: auto;
  flex: none;
  color: #777;
}

.overrides {
  margin: 20px 0 0 20px;
  padding: 0 13px 15px 0;
  border-top: 2px solid #dfdfdf;
  border-bottom: 2px solid #dfdfdf;
}

.ov-head {
  display: flex;
  align-items: center;
  justify-content: space-between;
  height: 60px;
  padding-right: 3px;
}

.ov-head b {
  font-weight: 600;
}

.ov-row {
  display: flex;
  align-items: center;
  height: 32px;
}

.ov-type {
  gap: 7px;
  padding-left: 7px;
}

.hook {
  width: 18px;
  height: 14px;
  margin: 0 3px 0 2px;
}

.sym {
  width: 28px;
  height: 28px;
}

.ov-row .sym + span, .ov-row .hook + svg + span {
  margin-left: 8px;
}

.indent {
  margin-left: 21px;
}

.mt5 {
  margin-top: 5px;
}

.mt7 {
  margin-top: 7px;
}

.mt8 {
  margin-top: 8px;
}

.mt17 {
  margin-top: 17px;
}

.sel {
  padding: 1px 8px 0 10px;
}

.slot {
  display: flex;
  align-items: center;
  width: 38px;
  flex: none;
}

.slot-list {
  width: 28px;
  height: 16px;
  color: #444;
}

.ghost-bar {
  width: 26px;
  height: 1px;
  background-color: #eee;
}

.val {
  white-space: nowrap;
  padding-top: 1px;
}

.val-tight {
  letter-spacing: -0.15px;
}

.red {
  display: block;
  height: 5px;
  border-radius: 3px;
  background-color: #ee1c25;
}

.red1 {
  width: 189px;
  margin: 4px 0 0 6px;
}

.red2 {
  width: 193px;
  margin: 10px 0 0 6px;
}

.red3 {
  width: 147px;
  margin: 6px 0 0 4px;
}

.layer-chip {
  display: flex;
  align-items: center;
  justify-content: center;
  width: 26px;
  height: 26px;
  margin-left: 11px;
  border-radius: 50%;
  background-color: #dcdcdc;
}

.text-field {
  height: 41px;
  margin-top: 9px;
  padding-top: 1px;
  font-size: 20px;
}

.style-field {
  margin-top: 5px;
}

.aa {
  display: block;
  width: 30px;
  height: 30px;
  margin-left: -1px;
  line-height: 30px;
  text-align: center;
  font-size: 19px;
  font-weight: 500;
  border-radius: 3px;
  color: #fff;
  background-color: #aaa;
}

.event-row {
  gap: 6px;
  margin-top: 21px;
  padding-left: 4px;
}

.event-row .layer-chip {
  margin-left: 5px;
}

.placeholder-field {
  margin-top: 9px;
  padding-top: 1px;
  color: #bdbdbd;
}

.action-icons {
  margin-left: 20px;
  padding: 12px 13px 0 0;
}

.last-field {
  margin-top: 6px;
}
```
